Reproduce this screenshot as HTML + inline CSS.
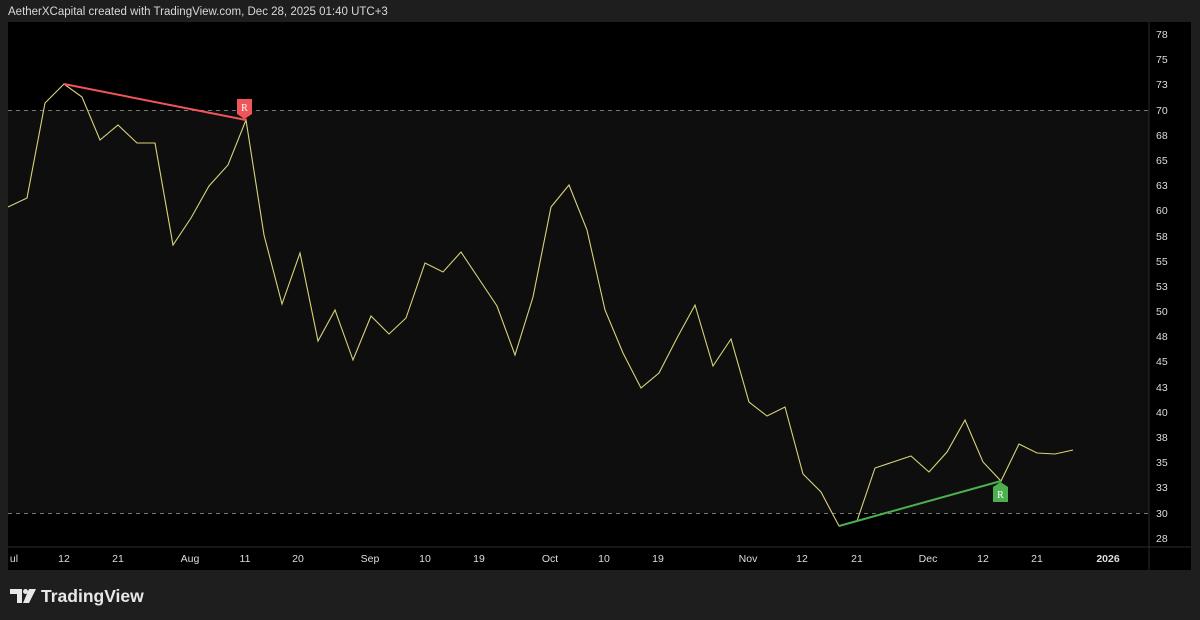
<!DOCTYPE html>
<html><head><meta charset="utf-8"><style>
html,body{margin:0;padding:0;background:#1e1e1e;width:1200px;height:620px;overflow:hidden;font-family:"Liberation Sans",sans-serif}
</style></head><body>
<svg width="1200" height="620" xmlns="http://www.w3.org/2000/svg" style="position:absolute;left:0;top:0">
<rect width="1200" height="620" fill="#1e1e1e"/>
<text x="8" y="15" fill="#d8d8d8" font-size="11.5">AetherXCapital created with TradingView.com, Dec 28, 2025 01:40 UTC+3</text>
<rect x="8" y="22" width="1183" height="548" fill="#000"/>
<rect x="8" y="110" width="1141" height="403" fill="#0e0e0e"/>
<line x1="8" y1="547" x2="1191" y2="547" fill="none" stroke="#2a2a2a"/>
<line x1="1149" y1="22" x2="1149" y2="570" stroke="#2a2a2a"/>
<line x1="8" y1="110.5" x2="1149" y2="110.5" stroke="#777" stroke-dasharray="4,4"/>
<line x1="8" y1="513.5" x2="1149" y2="513.5" stroke="#777" stroke-dasharray="4,4"/>
<g fill="#ddd" font-size="10.5">
<text x="1156" y="38">78</text><text x="1156" y="63">75</text><text x="1156" y="88">73</text><text x="1156" y="114">70</text><text x="1156" y="139">68</text><text x="1156" y="164">65</text><text x="1156" y="189">63</text><text x="1156" y="214">60</text><text x="1156" y="240">58</text><text x="1156" y="265">55</text><text x="1156" y="290">53</text><text x="1156" y="315">50</text><text x="1156" y="340">48</text><text x="1156" y="365">45</text><text x="1156" y="391">43</text><text x="1156" y="416">40</text><text x="1156" y="441">38</text><text x="1156" y="466">35</text><text x="1156" y="491">33</text><text x="1156" y="517">30</text><text x="1156" y="542">28</text>
</g>
<g fill="#ddd" font-size="10.5" text-anchor="middle">
<text x="14" y="562">ul</text><text x="64" y="562">12</text><text x="118" y="562">21</text><text x="190" y="562">Aug</text><text x="245" y="562">11</text><text x="298" y="562">20</text><text x="370" y="562">Sep</text><text x="425" y="562">10</text><text x="479" y="562">19</text><text x="550" y="562">Oct</text><text x="604" y="562">10</text><text x="658" y="562">19</text><text x="748" y="562">Nov</text><text x="802" y="562">12</text><text x="857" y="562">21</text><text x="928" y="562">Dec</text><text x="983" y="562">12</text><text x="1037" y="562">21</text><text x="1108" y="562" font-weight="bold">2026</text>
</g>
<polyline fill="none" stroke="#d9d27a" stroke-width="1.1" points="8,207 27,198 45,103 64,84 82,97 100,140 118,125 137,143 155,143 173,245 191,218 209,186 228,165 246,120 264,235 282,304 300,253 318,341 335,310 353,360 371,316 389,334 406,318 425,263 443,272 461,252 479,279 497,306 515,355 533,297 551,207 569,185 587,230 605,310 623,353 641,388 659,373 677,338 695,305 713,366 731,339 749,402 767,416 785,407 803,474 821,492 839,526 857,521 875,468 893,462 911,456 929,472 947,452 965,420 983,462 1001,481 1019,444 1037,453 1055,454 1073,450"/>
<line x1="64" y1="84" x2="246" y2="120" stroke="#f0555a" stroke-width="2"/>
<line x1="839" y1="526" x2="1001" y2="481" stroke="#4caf50" stroke-width="2"/>
<path d="M237,99 h15 v15 l-7.5,5 l-7.5,-5 z" fill="#f0555a"/>
<text x="244.5" y="111" fill="#fff" font-size="10" text-anchor="middle" font-family="Liberation Serif,serif">R</text>
<path d="M993,487 l7.5,-5 l7.5,5 v15 h-15 z" fill="#4caf50"/>
<text x="1000.5" y="498" fill="#fff" font-size="10" text-anchor="middle" font-family="Liberation Serif,serif">R</text>
<g fill="#e8e8e8">
<path d="M10,589 h12 v14 h-5 v-9 h-7 z"/>
<circle cx="25.5" cy="591.5" r="2.5"/>
<path d="M29,589 h7 l-7,14 h-6 z"/>
</g>
<text x="41" y="602" fill="#e8e8e8" font-size="17.5" font-weight="bold">TradingView</text>
</svg>
</body></html>
